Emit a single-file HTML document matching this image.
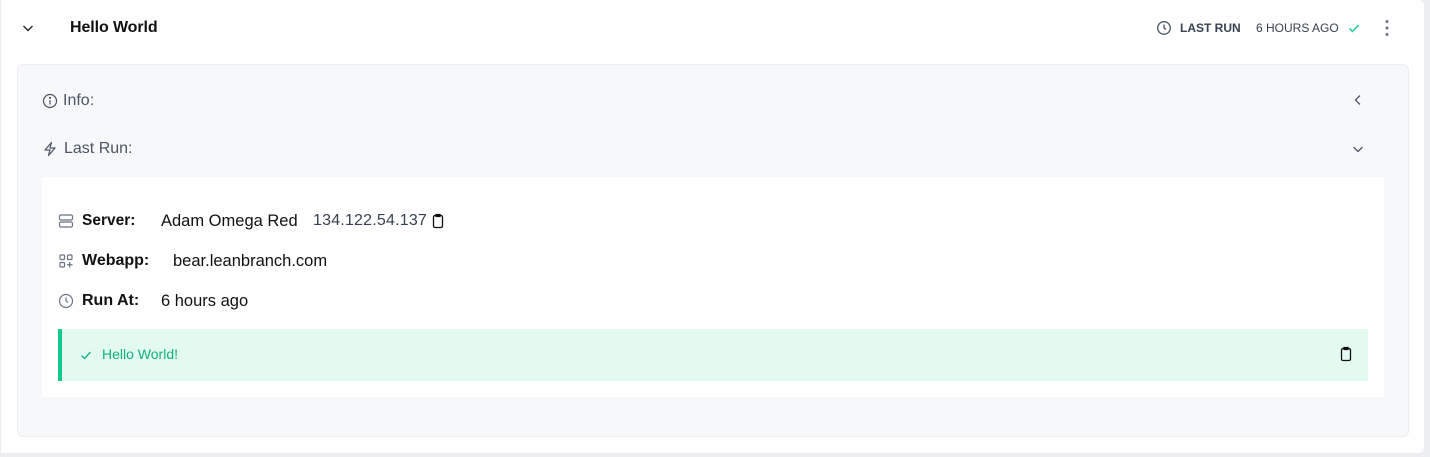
<!DOCTYPE html>
<html><head><style>
body{margin:0;width:1430px;height:457px;background:#eceef1;font-family:"Liberation Sans",sans-serif;overflow:hidden;position:relative}
.card{position:absolute;left:0;top:0;width:1424px;height:453px;background:#fff;border-radius:0 6px 6px 0;border-left:1px solid #eee;box-sizing:border-box}
.panel{position:absolute;left:17px;top:64px;width:1392px;height:373px;background:#f7f8fa;border:1px solid #eceef1;border-radius:6px;box-sizing:border-box}
.inner{position:absolute;left:42px;top:177px;width:1342px;height:220px;background:#fff}
.green{position:absolute;left:58px;top:329px;width:1310px;height:52px;background:#e3faf1;border-left:4px solid #10c98f;box-sizing:border-box}
.t{position:absolute;white-space:nowrap}
svg{position:absolute}
</style></head><body>
<div class="card">
<svg style="left:20px;top:21px" width="14" height="14" viewBox="0 0 14 14" fill="none" stroke="#222" stroke-width="1.4"><path d="M2.5 5l4.5 4.5 4.5-4.5"/></svg>
<div class="t" style="left:69px;top:19px;font-size:16px;font-weight:bold;color:#111;letter-spacing:-0.1px">Hello World</div>
<svg style="left:1155px;top:20px" width="16" height="16" viewBox="0 0 16 16" fill="none" stroke="#4b5563" stroke-width="1.3"><circle cx="8" cy="8" r="6.3"/><path d="M8 4.5V8l2 1.5"/></svg>
<div class="t" style="left:1179px;top:21px;font-size:12px;font-weight:bold;color:#374151">LAST RUN</div>
<div class="t" style="left:1255px;top:21px;font-size:12px;color:#374151">6 HOURS AGO</div>
<svg style="left:1346px;top:21px" width="14" height="14" viewBox="0 0 14 14" fill="none" stroke="#10c98f" stroke-width="1.4"><path d="M2.5 7.5l3 3 6-6.5"/></svg>
<svg style="left:1382px;top:19px" width="8" height="18" viewBox="0 0 8 18" fill="#6b7280"><circle cx="4" cy="2.5" r="1.5"/><circle cx="4" cy="9" r="1.5"/><circle cx="4" cy="15.5" r="1.5"/></svg>
</div>
<div class="panel"></div>
<svg style="left:42px;top:93px" width="16" height="16" viewBox="0 0 16 16" fill="none" stroke="#4b5563" stroke-width="1.2"><circle cx="8" cy="8" r="6.5"/><path d="M8 7v4.5"/><circle cx="8" cy="4.8" r=".5" fill="#4b5563"/></svg>
<div class="t" style="left:63px;top:92px;font-size:16px;color:#4b5563">Info:</div>
<svg style="left:1351px;top:93px" width="14" height="14" viewBox="0 0 14 14" fill="none" stroke="#4b5563" stroke-width="1.3"><path d="M9 2.5L4.5 7 9 11.5"/></svg>
<svg style="left:42px;top:141px" width="16" height="16" viewBox="0 0 16 16" fill="none" stroke="#4b5563" stroke-width="1.2" stroke-linejoin="round"><path d="M9.5 1.5L3 9h5l-1.5 5.5L13 7H8z"/></svg>
<div class="t" style="left:64px;top:140px;font-size:16px;color:#4b5563">Last Run:</div>
<svg style="left:1351px;top:142px" width="14" height="14" viewBox="0 0 14 14" fill="none" stroke="#4b5563" stroke-width="1.3"><path d="M2.5 5l4.5 4.5 4.5-4.5"/></svg>
<div class="inner"></div>
<svg style="left:58px;top:213px" width="16" height="16" viewBox="0 0 16 16" fill="none" stroke="#6b7280" stroke-width="1.2"><rect x="1.5" y="2" width="13" height="5" rx="1.5"/><rect x="1.5" y="9" width="13" height="5" rx="1.5"/></svg>
<div class="t" style="left:82px;top:212px;font-size:15.5px;font-weight:bold;color:#111">Server:</div>
<div class="t" style="left:161px;top:212px;font-size:16.5px;color:#111">Adam Omega Red</div>
<div class="t" style="left:313px;top:212px;font-size:16px;color:#374151;letter-spacing:0.2px">134.122.54.137</div>
<svg style="left:431px;top:213px" width="14" height="16" viewBox="0 0 14 16" fill="none" stroke="#111" stroke-width="1.3"><rect x="2.5" y="2.5" width="9" height="12" rx="1.5"/><path d="M5 1.5h4v2H5z"/></svg>
<svg style="left:58px;top:253px" width="16" height="16" viewBox="0 0 16 16" fill="none" stroke="#6b7280" stroke-width="1.2"><rect x="2" y="2" width="4.5" height="4.5" rx="1"/><rect x="9.5" y="2" width="4.5" height="4.5" rx="1"/><rect x="2" y="9.5" width="4.5" height="4.5" rx="1"/><path d="M11.75 9v5.5M9 11.75h5.5"/></svg>
<div class="t" style="left:82px;top:252px;font-size:16px;font-weight:bold;color:#111">Webapp:</div>
<div class="t" style="left:173px;top:252px;font-size:16.5px;color:#111">bear.leanbranch.com</div>
<svg style="left:58px;top:293px" width="16" height="16" viewBox="0 0 16 16" fill="none" stroke="#6b7280" stroke-width="1.2"><circle cx="8" cy="8" r="6.5"/><path d="M8 4.5V8l2 1.5"/></svg>
<div class="t" style="left:82px;top:292px;font-size:16px;font-weight:bold;color:#111">Run At:</div>
<div class="t" style="left:161px;top:292px;font-size:16.5px;color:#111">6 hours ago</div>
<div class="green"></div>
<svg style="left:79px;top:348px" width="14" height="14" viewBox="0 0 14 14" fill="none" stroke="#10b981" stroke-width="1.3"><path d="M2.5 7.5l3 3 6-6.5"/></svg>
<div class="t" style="left:102px;top:346px;font-size:14px;color:#10b07e">Hello World!</div>
<svg style="left:1339px;top:346px" width="14" height="16" viewBox="0 0 14 16" fill="none" stroke="#111" stroke-width="1.3"><rect x="2.5" y="2.5" width="9" height="12" rx="1.5"/><path d="M5 1.5h4v2H5z"/></svg>
</body></html>
